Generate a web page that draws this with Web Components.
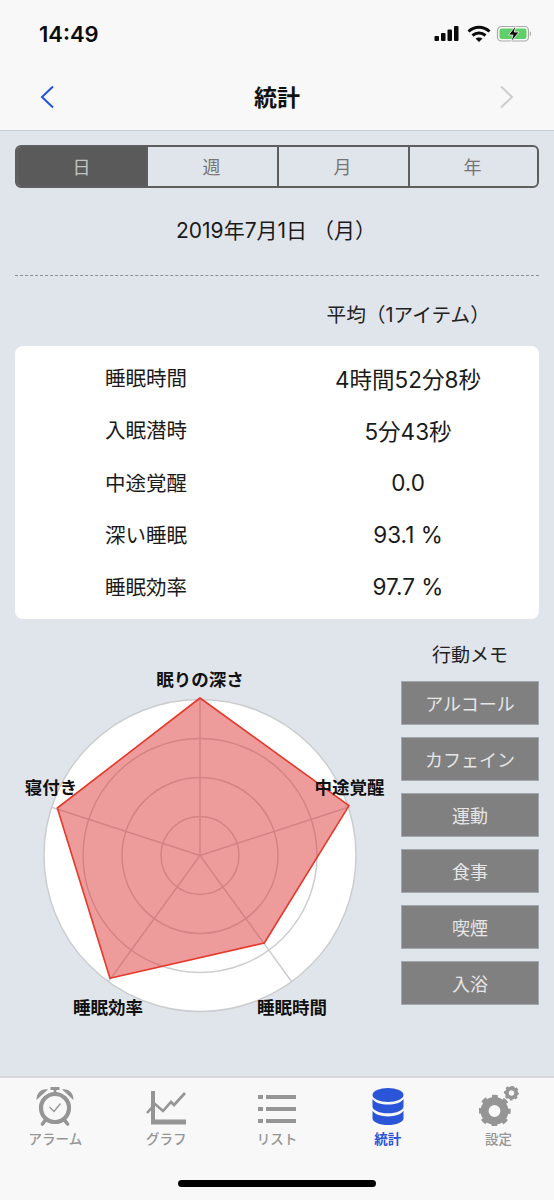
<!DOCTYPE html>
<html lang="ja">
<head>
<meta charset="utf-8">
<title>統計</title>
<style>
    html, body {
        margin: 0;
        padding: 0;
        background: #e0e5ec;
    }

    body {
        font-family: Inter, "Noto Sans CJK JP", sans-serif;
        color: #111;
    }
</style>
</head>
<body>

<app-screen>
    <nav-header title="統計"></nav-header>
    <main-panel>
        <segment-control></segment-control>
        <date-line>2019年7月1日 （月）</date-line>
        <avg-heading>平均（1アイテム）</avg-heading>
        <stat-card>
            <stat-row label="睡眠時間" value="4時間52分8秒"></stat-row>
            <stat-row label="入眠潜時" value="5分43秒"></stat-row>
            <stat-row label="中途覚醒" value="0.0"></stat-row>
            <stat-row label="深い睡眠" value="93.1 %"></stat-row>
            <stat-row label="睡眠効率" value="97.7 %"></stat-row>
        </stat-card>
        <chart-section>
            <radar-chart></radar-chart>
            <memo-list>
                <memo-button>アルコール</memo-button>
                <memo-button>カフェイン</memo-button>
                <memo-button>運動</memo-button>
                <memo-button>食事</memo-button>
                <memo-button>喫煙</memo-button>
                <memo-button>入浴</memo-button>
            </memo-list>
        </chart-section>
    </main-panel>
    <tab-bar></tab-bar>
</app-screen>

<script>
class AppScreen extends HTMLElement {
    constructor() {
        super();
        this.attachShadow({ mode: "open" });
        this.shadowRoot.innerHTML = `
            <style>
                :host {
                    display: flex;
                    flex-direction: column;
                    width: 554px;
                    height: 1200px;
                    overflow: hidden;
                }
            </style>
            <slot></slot>
        `;
    }
}

class NavHeader extends HTMLElement {
    constructor() {
        super();
        this.attachShadow({ mode: "open" });
    }

    connectedCallback() {
        this.shadowRoot.innerHTML = `
            <style>
                :host {
                    display: block;
                    height: 131px;
                    box-sizing: border-box;
                    background: #f8f8f8;
                    border-bottom: 1px solid #c9cbcf;
                    flex: none;
                }

                .status {
                    display: flex;
                    align-items: center;
                    height: 68px;
                    padding: 0 22px 0 39px;
                    box-sizing: border-box;
                }

                .time {
                    font-size: 22px;
                    font-weight: 600;
                    color: #0b0b0b;
                    flex: 1;
                }

                .status svg {
                    display: block;
                }

                .nav {
                    display: flex;
                    align-items: center;
                    justify-content: space-between;
                    height: 58px;
                    padding: 0 40px;
                }

                .title {
                    font-size: 23px;
                    font-weight: 700;
                    color: #111;
                    margin-top: -2px;
                }
            </style>
            <div class="status">
                <span class="time">14:49</span>
                <svg width="100" height="18" viewBox="0 0 100 18">
                    <g fill="#0b0b0b">
                        <rect x="2.500" y="11" width="4.500" height="5" rx="1"/>
                        <rect x="9" y="8" width="4.500" height="8" rx="1"/>
                        <rect x="15.500" y="4.500" width="4.500" height="11.500" rx="1"/>
                        <rect x="22" y="1" width="4.500" height="15" rx="1"/>
                    </g>
                    <g fill="none" stroke="#0b0b0b" stroke-width="3">
                        <path d="M36.500 6.500c6-5.600 15-5.600 21 0"/>
                        <path d="M40.500 10.500c3.800-3.300 9.200-3.300 13 0"/>
                    </g>
                    <path d="M43.500 13.500c2-1.500 5-1.500 7 0l-3.500 3.500z" fill="#0b0b0b"/>
                    <rect x="65.500" y="1.500" width="31" height="14.500" rx="4" fill="none" stroke="#a9a9a9" stroke-width="1.200"/>
                    <path d="M98 6.500c1.400.4 1.400 4.100 0 4.500z" fill="#a9a9a9"/>
                    <rect x="67.500" y="3.500" width="27" height="10.500" rx="2.200" fill="#5fd068"/>
                    <path d="M84 0.500l-7.500 9.500h4.500l-2 7 8-10h-4.800z" fill="#0b0b0b" stroke="#f8f8f8" stroke-width=".8"/>
                </svg>
            </div>
            <div class="nav">
                <svg width="15" height="24" viewBox="0 0 15 24"><path d="M13 1.500L2 12l11 10.500" fill="none" stroke="#2454d6" stroke-width="2"/></svg>
                <span class="title">${this.getAttribute("title")}</span>
                <svg width="15" height="24" viewBox="0 0 15 24"><path d="M2 1.500L13 12 2 22.500" fill="none" stroke="#cdcdcd" stroke-width="2"/></svg>
            </div>
        `;
    }
}

class MainPanel extends HTMLElement {
    constructor() {
        super();
        this.attachShadow({ mode: "open" });
        this.shadowRoot.innerHTML = `
            <style>
                :host {
                    display: block;
                    flex: 1;
                    padding: 14px 15px 0;
                    box-sizing: border-box;
                }
            </style>
            <slot></slot>
        `;
    }
}

class SegmentControl extends HTMLElement {
    constructor() {
        super();
        this.attachShadow({ mode: "open" });
        const items = ["日", "週", "月", "年"];
        this.shadowRoot.innerHTML = `
            <style>
                :host {
                    display: grid;
                    grid-template-columns: 129px 131px 131px 1fr;
                    height: 43px;
                    box-sizing: border-box;
                    border: 2px solid #5e5e5e;
                    border-radius: 6px;
                    overflow: hidden;
                }

                .seg {
                    display: flex;
                    align-items: center;
                    justify-content: center;
                    font-size: 18px;
                    color: #757575;
                    border-left: 2px solid #5e5e5e;
                    padding: 0 2px 1px 0;
                }

                .seg:first-child {
                    border-left: none;
                    padding-right: 4px;
                }

                .on {
                    background: #5a5a5a;
                    color: #c4c4c4;
                }
            </style>
            ${items.map((t, i) => `<div class="seg ${i == 0 ? "on" : ""}">${t}</div>`).join("")}
        `;
    }
}

class DateLine extends HTMLElement {
    constructor() {
        super();
        this.attachShadow({ mode: "open" });
        this.shadowRoot.innerHTML = `
            <style>
                :host {
                    display: flex;
                    align-items: center;
                    justify-content: center;
                    height: 88px;
                    box-sizing: border-box;
                    padding: 0 2px 5px 0;
                    border-bottom: 1px dashed #8d8f92;
                    font-size: 21px;
                    color: #1a1a1a;
                }
            </style>
            <slot></slot>
        `;
    }
}

class AvgHeading extends HTMLElement {
    constructor() {
        super();
        this.attachShadow({ mode: "open" });
        this.shadowRoot.innerHTML = `
            <style>
                :host {
                    display: flex;
                    align-items: center;
                    justify-content: flex-end;
                    height: 70px;
                    padding: 5px 49px 0 0;
                    box-sizing: border-box;
                    font-size: 19.700px;
                    color: #222;
                }
            </style>
            <slot></slot>
        `;
    }
}

class StatCard extends HTMLElement {
    constructor() {
        super();
        this.attachShadow({ mode: "open" });
        this.shadowRoot.innerHTML = `
            <style>
                :host {
                    display: flex;
                    flex-direction: column;
                    height: 273px;
                    padding: 6px 0 6px;
                    box-sizing: border-box;
                    background: #fff;
                    border-radius: 8px;
                }
            </style>
            <slot></slot>
        `;
    }
}

class StatRow extends HTMLElement {
    constructor() {
        super();
        this.attachShadow({ mode: "open" });
    }

    connectedCallback() {
        this.shadowRoot.innerHTML = `
            <style>
                :host {
                    display: grid;
                    grid-template-columns: 1fr 1fr;
                    align-items: center;
                    flex: 1;
                    text-align: center;
                    font-size: 20.500px;
                    color: #1a1a1a;
                }

                .label {
                    padding-bottom: 2px;
                }

                .value {
                    font-size: 22.500px;
                }
            </style>
            <div class="label">${this.getAttribute("label")}</div>
            <div class="value">${this.getAttribute("value")}</div>
        `;
    }
}

class ChartSection extends HTMLElement {
    constructor() {
        super();
        this.attachShadow({ mode: "open" });
        this.shadowRoot.innerHTML = `
            <style>
                :host {
                    display: flex;
                    justify-content: space-between;
                    margin: 0 0 0 -15px;
                    padding-top: 20px;
                }
            </style>
            <slot></slot>
        `;
    }
}

class RadarChart extends HTMLElement {
    constructor() {
        super();
        this.attachShadow({ mode: "open" });
        const cx = 200, cy = 216.500;
        const spokes = [0, 72, 144, 216, 288].map(a => {
            const r = a * Math.PI / 180;
            return `M${cx} ${cy}L${(cx + 156 * Math.sin(r)).toFixed(1)} ${(cy - 156 * Math.cos(r)).toFixed(1)}`;
        }).join("");
        // chart top edge sits at y=640 on the page
        this.shadowRoot.innerHTML = `
            <style>
                :host {
                    display: block;
                    width: 400px;
                    height: 390px;
                    flex: none;
                }

                svg {
                    display: block;
                }

                text {
                    font-family: Inter, "Noto Sans CJK JP", sans-serif;
                    font-size: 17.500px;
                    font-weight: 700;
                    fill: #111;
                    text-anchor: middle;
                }
            </style>
            <svg width="400" height="390" viewBox="0 0 400 390">
                <circle cx="${cx}" cy="${cy}" r="156" fill="#fff" stroke="#cbcdcf" stroke-width="1.500"/>
                <g fill="none" stroke="#cbcdcf" stroke-width="1.500">
                    <circle cx="${cx}" cy="${cy}" r="39"/>
                    <circle cx="${cx}" cy="${cy}" r="78"/>
                    <circle cx="${cx}" cy="${cy}" r="117"/>
                    <path d="${spokes}"/>
                </g>
                <polygon points="200,59 349,166.700 264.300,304 110,339.300 57.300,169"
                    fill="rgba(222,56,56,.5)" stroke="#e5392c" stroke-width="1.600" stroke-linejoin="round"/>
                <text x="200" y="47">眠りの深さ</text>
                <text x="349.500" y="155">中途覚醒</text>
                <text x="51" y="155">寝付き</text>
                <text x="108" y="375">睡眠効率</text>
                <text x="292" y="375">睡眠時間</text>
            </svg>
        `;
    }
}

class MemoList extends HTMLElement {
    constructor() {
        super();
        this.attachShadow({ mode: "open" });
        this.shadowRoot.innerHTML = `
            <style>
                :host {
                    display: flex;
                    flex-direction: column;
                    gap: 12px;
                    width: 138px;
                    flex: none;
                }

                .head {
                    height: 29px;
                    margin-top: 1px;
                    text-align: center;
                    font-size: 19px;
                    line-height: 31px;
                    color: #222;
                }
            </style>
            <div class="head">行動メモ</div>
            <slot></slot>
        `;
    }
}

class MemoButton extends HTMLElement {
    constructor() {
        super();
        this.attachShadow({ mode: "open" });
        this.shadowRoot.innerHTML = `
            <style>
                :host {
                    display: flex;
                    align-items: center;
                    justify-content: center;
                    height: 44px;
                    box-sizing: border-box;
                    background: #808080;
                    border: 1px solid #a3a6aa;
                    color: #e6e6e6;
                    font-size: 18px;
                }
            </style>
            <slot></slot>
        `;
    }
}

class TabBar extends HTMLElement {
    constructor() {
        super();
        this.attachShadow({ mode: "open" });
        const gray = "#959595";
        const blue = "#2b55d9";
        const gear = (x, y, r, col) => `
            <circle cx="${x}" cy="${y}" r="${r * .62}" fill="none" stroke="${col}" stroke-width="${r * .5}"/>
            <circle cx="${x}" cy="${y}" r="${r * .86}" fill="none" stroke="${col}" stroke-width="${r * .3}"
                stroke-dasharray="${(r * .86 * Math.PI * 2 / 16).toFixed(2)}" stroke-dashoffset="${(r * .86 * Math.PI * 2 / 32).toFixed(2)}"/>
        `;
        const tabs = [
            { label: "アラーム", icon: `
                <g fill="none" stroke="${gray}">
                    <circle cx="20" cy="22" r="14" stroke-width="4.200"/>
                    <path d="M14.500 21l4.500 4.500 6.500-8" stroke-width="1.300"/>
                    <path d="M20 8V3M15.500 2.500h9" stroke-width="2.800"/>
                    <path d="M10.500 34l-3 4M29.500 34l3 4" stroke-width="3.600" stroke-linecap="round"/>
                </g>
                <path d="M1.500 14C1.500 7 6 2.500 13 3.500zM38.500 14c0-7-4.500-11.500-11.500-10.500z" fill="${gray}"/>
            ` },
            { label: "グラフ", icon: `
                <path d="M5 5h4v28.500h31v5H5z" fill="${gray}"/>
                <path d="M1 27L9 18l8 7 8-9 3 3 11-12" fill="none" stroke="${gray}" stroke-width="2.600"/>
            ` },
            { label: "リスト", icon: `
                <g fill="${gray}">
                    <rect x="1" y="9" width="5" height="4"/>
                    <rect x="9" y="9" width="30" height="4"/>
                    <rect x="1" y="21" width="5" height="4"/>
                    <rect x="9" y="21" width="30" height="4"/>
                    <rect x="1" y="33" width="5" height="4"/>
                    <rect x="9" y="33" width="30" height="4"/>
                </g>
            ` },
            { label: "統計", active: true, icon: `
                <ellipse cx="20" cy="9" rx="15.500" ry="7" fill="${blue}"/>
                <path d="M4.500 13c2.500 3.800 8.500 5.600 15.500 5.600s13-1.800 15.500-5.600v7.500c0 3.800-7 6.800-15.500 6.800S4.500 24.300 4.500 20.500z" fill="${blue}"/>
                <path d="M4.500 24.800c2.500 3.800 8.500 5.600 15.500 5.600s13-1.800 15.500-5.600v7.500c0 3.800-7 6.800-15.500 6.800S4.500 36.100 4.500 32.300z" fill="${blue}"/>
            ` },
            { label: "設定", icon: gear(15.500, 25, 16, gray) + gear(32.500, 7, 7.500, gray) }
        ];
        this.shadowRoot.innerHTML = `
            <style>
                :host {
                    display: block;
                    height: 124px;
                    flex: none;
                    box-sizing: border-box;
                    background: #f8f8f8;
                    border-top: 2px solid #d6d8dc;
                }

                .tabs {
                    display: grid;
                    grid-template-columns: repeat(5, 1fr);
                    padding-top: 8px;
                }

                .tab {
                    display: flex;
                    flex-direction: column;
                    align-items: center;
                    font-size: 13.500px;
                    font-weight: 500;
                    color: ${gray};
                }

                .tab svg {
                    display: block;
                }

                .tab.on {
                    color: ${blue};
                    font-weight: 700;
                }

                .tab span {
                    line-height: 18px;
                    margin-top: 4px;
                }

                .home {
                    width: 198px;
                    height: 7px;
                    margin: 32px auto 0;
                    border-radius: 4px;
                    background: #000;
                }
            </style>
            <div class="tabs">
                ${tabs.map(t => `
                    <div class="tab ${t.active ? "on" : ""}">
                        <svg width="40" height="40" viewBox="0 0 40 40">${t.icon}</svg>
                        <span>${t.label}</span>
                    </div>
                `).join("")}
            </div>
            <div class="home"></div>
        `;
    }
}

customElements.define("app-screen", AppScreen);
customElements.define("nav-header", NavHeader);
customElements.define("main-panel", MainPanel);
customElements.define("segment-control", SegmentControl);
customElements.define("date-line", DateLine);
customElements.define("avg-heading", AvgHeading);
customElements.define("stat-card", StatCard);
customElements.define("stat-row", StatRow);
customElements.define("chart-section", ChartSection);
customElements.define("radar-chart", RadarChart);
customElements.define("memo-list", MemoList);
customElements.define("memo-button", MemoButton);
customElements.define("tab-bar", TabBar);
</script>
</body>
</html>
